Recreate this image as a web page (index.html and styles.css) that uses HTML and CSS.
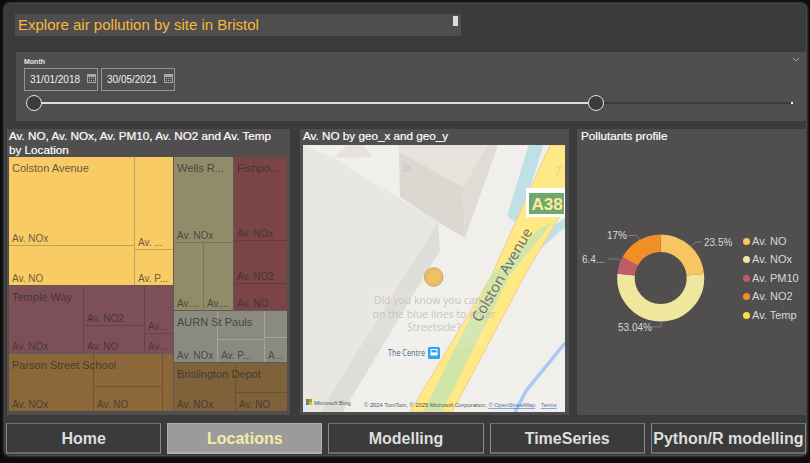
FILE: index.html
```html
<!DOCTYPE html>
<html>
  <head>
    <title>Explore air pollution by site in Bristol</title>
    <link rel="stylesheet" href="styles.css">
  </head>
  <body>
    <div class="frame">
      <!-- Title -->
      <div class="title-bar">
        <span>Explore air pollution by site in Bristol</span>
        <i class="title-handle"></i>
      </div>

      <!-- Month slicer -->
      <div class="slicer">
        <svg class="chevron" width="8" height="5" viewBox="0 0 8 5"><path d="M1 1l3 3 3-3" fill="none" stroke="#a8a8a8" stroke-width="1"/></svg>
        <div class="slicer-label">Month</div>
        <div class="dates">
          <div class="date-box">31/01/2018
            <svg class="cal" width="9" height="9" viewBox="0 0 9 9"><path d="M0 0h9v9H0z" fill="#a9a9a9"/><path d="M1 3h7v5H1z" fill="#504e4f"/><path d="M2 4h1v1H2zM4 4h1v1H4zM6 4h1v1H6zM2 6h1v1H2zM4 6h1v1H4zM6 6h1v1H6z" fill="#a9a9a9"/></svg>
          </div>
          <div class="date-box">30/05/2021
            <svg class="cal" width="9" height="9" viewBox="0 0 9 9"><path d="M0 0h9v9H0z" fill="#a9a9a9"/><path d="M1 3h7v5H1z" fill="#504e4f"/><path d="M2 4h1v1H2zM4 4h1v1H4zM6 4h1v1H6zM2 6h1v1H2zM4 6h1v1H4zM6 6h1v1H6z" fill="#a9a9a9"/></svg>
          </div>
        </div>
        <div class="slider">
          <i class="thumb"></i>
          <i class="track-on"></i>
          <i class="thumb"></i>
          <i class="track-off"></i>
          <i class="track-end"></i>
        </div>
      </div>

      <div class="panels">
        <!-- Treemap -->
        <div class="panel panel-tree">
          <h2>Av. NO, Av. NOx, Av. PM10, Av. NO2 and Av. Temp by Location</h2>
          <div class="tree row">
            <div class="col" style="flex: 164">
              <div class="group row yellow" style="flex: 128">
                <span class="name">Colston Avenue</span>
                <div class="col" style="flex: 125">
                  <div class="cell" style="flex: 88">Av. NOx</div>
                  <div class="cell" style="flex: 39">Av. NO</div>
                </div>
                <div class="col" style="flex: 38">
                  <div class="cell" style="flex: 92">Av. ...</div>
                  <div class="cell" style="flex: 35">Av. P...</div>
                </div>
              </div>
              <div class="group row plum" style="flex: 67">
                <span class="name">Temple Way</span>
                <div class="cell" style="flex: 74">Av. NOx</div>
                <div class="col" style="flex: 60">
                  <div class="cell" style="flex: 39">Av. NO2</div>
                  <div class="cell" style="flex: 27">Av. NO</div>
                </div>
                <div class="col" style="flex: 28">
                  <div class="cell" style="flex: 47">Av...</div>
                  <div class="cell" style="flex: 19">Av...</div>
                </div>
              </div>
              <div class="group row brown" style="flex: 57">
                <span class="name">Parson Street School</span>
                <div class="cell" style="flex: 84">Av. NOx</div>
                <div class="col" style="flex: 68">
                  <div class="cell" style="flex: 32"></div>
                  <div class="cell" style="flex: 24">Av. NO</div>
                </div>
                <div class="cell" style="flex: 10"></div>
              </div>
            </div>
            <div class="col" style="flex: 113">
              <div class="row" style="flex: 153">
                <div class="group col olive" style="flex: 59">
                  <span class="name">Wells R...</span>
                  <div class="cell" style="flex: 85">Av. NOx</div>
                  <div class="row" style="flex: 67">
                    <div class="cell" style="flex: 29">Av....</div>
                    <div class="cell" style="flex: 29">Av....</div>
                  </div>
                </div>
                <div class="group col wine" style="flex: 53">
                  <span class="name">Fishpo...</span>
                  <div class="cell" style="flex: 83">Av. NOx</div>
                  <div class="cell" style="flex: 42">Av. NO2</div>
                  <div class="cell" style="flex: 26">Av. NO</div>
                </div>
              </div>
              <div class="group row grey" style="flex: 51">
                <span class="name">AURN St Pauls</span>
                <div class="cell" style="flex: 43">Av. NOx</div>
                <div class="col" style="flex: 46">
                  <div class="cell" style="flex: 28"></div>
                  <div class="cell" style="flex: 22">Av. P...</div>
                </div>
                <div class="col" style="flex: 22">
                  <div class="cell" style="flex: 26"></div>
                  <div class="cell" style="flex: 24">A...</div>
                </div>
              </div>
              <div class="group row tan" style="flex: 48">
                <span class="name">Brislington Depot</span>
                <div class="cell" style="flex: 61">Av. NOx</div>
                <div class="col" style="flex: 51">
                  <div class="cell" style="flex: 29"></div>
                  <div class="cell" style="flex: 18">Av. NO</div>
                </div>
              </div>
            </div>
          </div>
        </div>

        <!-- Map -->
        <div class="panel panel-map">
          <h2>Av. NO by geo_x and geo_y</h2>
          <svg class="map" width="262" height="267" viewBox="303 145 262 267">
            <rect x="303" y="145" width="262" height="267" fill="#f0efeb"/>
            <path d="M347 145L333 158 373 157 363 145z" fill="#e6e3dd"/>
            <path d="M303 145L333 158 438 222 405 275 320 412H303z" fill="#e9e7e1"/>
            <path d="M438 222L440 251 425 275 343 412H320L405 275z" fill="#dfddd7"/>
            <path d="M398 145H488L463 187 399 152z" fill="#e6e3dd"/>
            <path d="M399 152L463 187 465 238 438 222 400 197z" fill="#dbd8d2"/>
            <path d="M463 187L488 145H498L465 238z" fill="#dfdcd6"/>
            <path d="M536 145L515 214" stroke="#bfe0e4" stroke-width="14" stroke-linecap="round" fill="none"/>
            <path d="M565 218V227L537 252 550 228z" fill="#bfe0e4"/>
            <path d="M550 145L492 275 410 412H452L525 275 575 190 590 145z" fill="#ffe985" stroke="#f6c98a" stroke-width="1"/>
            <path d="M553 222L510 275 442 412H423L492 275 538 230z" fill="#d2e5a8"/>
            <path d="M565 343L526 391 515 412" stroke="#a9c8f5" stroke-width="3.5" fill="none"/>
            <path d="M557 176L560 167M556 168L561 166 563 170" stroke="#f2cf82" stroke-width="1" fill="none"/>
            <text class="map-num" x="402" y="171">35</text>
            <circle cx="433.7" cy="277" r="9.2" fill="#efc268" stroke="#c9a35a" stroke-width="1"/>
            <circle cx="433.7" cy="277" r="7" fill="none" stroke="#d8ac5a" stroke-width=".6"/>
            <rect x="370" y="290" width="115" height="56" fill="#fff" opacity=".08"/>
            <text class="map-tip" x="434" y="304">Did you know you can cli</text>
            <text class="map-tip" x="434" y="318">on the blue lines to enter</text>
            <text class="map-tip" x="434" y="331">Streetside?</text>
            <text class="map-road" transform="translate(480 323) rotate(-60)">Colston Avenue</text>
            <text class="map-place" x="388" y="356" textLength="37" lengthAdjust="spacingAndGlyphs">The Centre</text>
            <rect x="428" y="347" width="12" height="12" rx="1.5" fill="#2ea3ee"/>
            <path d="M430.5 349h7v6.5h-7z" fill="#fff"/>
            <path d="M431.5 350h5v2.500h-5zM431 356h1.500v1.500H431zM435.500 356H437v1.500h-1.500z" fill="#2ea3ee"/>
            <path d="M306 399h3v3h-3z" fill="#f25022"/>
            <path d="M309 399h3v3h-3z" fill="#7fba00"/>
            <path d="M306 402h3v3h-3z" fill="#00a4ef"/>
            <path d="M309 402h3v3h-3z" fill="#ffb900"/>
            <text class="map-small" x="314" y="405">Microsoft Bing</text>
            <text class="map-small" x="364" y="407">© 2024 TomTom, © 2025 Microsoft Corporation, <tspan class="map-link">© OpenStreetMap</tspan>  <tspan class="map-link" dx="4">Terms</tspan></text>
            <rect x="526" y="188" width="39" height="29" fill="#fff"/>
            <rect x="529" y="193" width="35" height="21" fill="#6fa96f"/>
            <text class="map-shield" x="547" y="209.500">A38</text>
          </svg>
        </div>

        <!-- Donut -->
        <div class="panel panel-donut">
          <h2>Pollutants profile</h2>
          <div class="donut-wrap">
            <svg class="donut" width="160" height="120" viewBox="581 218 160 120">
              <g fill="none" stroke-width="17.5">
                <path d="M660.7 243.25A34.75 34.75 0 0 1 695.3 274.73" stroke="#f7c661"/>
                <path d="M695.3 274.73A34.75 34.75 0 1 1 626.11 274.65" stroke="#efe79d"/>
                <path d="M626.11 274.65A34.75 34.75 0 0 1 630.25 261.26" stroke="#c05c6a"/>
                <path d="M630.25 261.26A34.75 34.75 0 0 1 660.7 243.25" stroke="#f28e26"/>
              </g>
              <g fill="none" stroke="#7c7c7c" stroke-width="1">
                <path d="M691 246L696 242H702"/>
                <path d="M628 235.500H637L640 240"/>
                <path d="M608 259H619L621 262"/>
                <path d="M652 327H661V322"/>
              </g>
              <text class="donut-label" x="704" y="246">23.5%</text>
              <text class="donut-label" x="607" y="239">17%</text>
              <text class="donut-label" x="582" y="263">6.4...</text>
              <text class="donut-label" x="618" y="331">53.04%</text>
            </svg>
            <ul class="legend">
              <li><i class="dot dot-no"></i>Av. NO</li>
              <li><i class="dot dot-nox"></i>Av. NOx</li>
              <li><i class="dot dot-pm"></i>Av. PM10</li>
              <li><i class="dot dot-no2"></i>Av. NO2</li>
              <li><i class="dot dot-temp"></i>Av. Temp</li>
            </ul>
          </div>
        </div>
      </div>

      <!-- Page navigation -->
      <nav class="nav">
        <a>Home</a>
        <a class="active">Locations</a>
        <a>Modelling</a>
        <a>TimeSeries</a>
        <a>Python/R modelling</a>
      </nav>
    </div>
  </body>
</html>
```

FILE: styles.css
```css
* {
  box-sizing: border-box;
}

html,
body {
  margin: 0;
  height: 463px;
  overflow: hidden;
}

body {
  background: #0c0c0c;
  font-family: "Liberation Sans", Arial, sans-serif;
  color: #fff;
}

.frame {
  width: 801px;
  height: 451px;
  margin: 4px 0 0 5px;
  padding: 10px 0 0 0;
  background: #3b3b3b;
  border-radius: 5px;
  box-shadow: 0 0 3px 1px #6a6a6a;
  display: flex;
  flex-direction: column;
}

.title-bar {
  position: relative;
  width: 446px;
  height: 22px;
  margin-left: 10px;
  padding-left: 3px;
  background: #4f4d4e;
  color: #f8b93c;
  font-size: 15px;
  line-height: 22px;
}

.title-handle {
  position: absolute;
  left: 438px;
  top: 2px;
  width: 5px;
  height: 10px;
  background: #dcdcdc;
}

.slicer {
  position: relative;
  height: 69px;
  margin: 16px 0 0 11px;
  padding: 5px 8px 0;
  background: #504e4f;
}

.chevron {
  position: absolute;
  right: 6px;
  top: 5px;
}

.slicer-label {
  font-size: 7px;
  font-weight: bold;
  line-height: 9px;
  color: #e6e6e6;
}

.dates {
  display: flex;
  gap: 3px;
  margin-top: 2px;
}

.date-box {
  width: 74px;
  height: 23px;
  padding: 0 1px 0 5px;
  border: 1px solid #959595;
  font-size: 10px;
  line-height: 21px;
  color: #f0f0f0;
  display: flex;
  justify-content: space-between;
  align-items: center;
}

.cal {
  margin-bottom: 2px;
}

.slider {
  display: flex;
  align-items: center;
  height: 16px;
  margin: 4px 0 0 2px;
}

.thumb {
  flex: none;
  width: 16px;
  height: 16px;
  border: 1px solid #e4e4e4;
  border-radius: 50%;
  background: #3b3b3b;
}

.track-on {
  flex: none;
  width: 546px;
  height: 2px;
  background: #dedede;
}

.track-off {
  flex: none;
  width: 187px;
  height: 2px;
  background: #3b3b3b;
}

.track-end {
  flex: none;
  width: 2px;
  height: 2px;
  background: #fff;
}

.panels {
  display: flex;
  height: 286px;
  margin-top: 8px;
  margin-left: 2px;
}

.panel {
  background: #504e4f;
  flex: none;
}

.panel h2 {
  margin: 0;
  font-size: 11.7px;
  font-weight: normal;
  line-height: 14px;
  color: #fff;
  -webkit-text-stroke: 0.2px #fff;
}

.panel-tree {
  width: 283px;
  padding: 0 3px 0 2px;
}

.panel-tree h2 {
  padding-right: 10px;
}

.panel-map {
  width: 269px;
  margin-left: 10px;
  padding: 0 4px 0 3px;
}

.panel-donut {
  width: 229px;
  margin-left: 8px;
  padding-left: 4px;
}

.tree {
  width: 278px;
  height: 254px;
  background: #5c5a5a;
}

.row {
  display: flex;
  gap: 1px;
  min-width: 0;
  min-height: 0;
}

.col {
  display: flex;
  flex-direction: column;
  gap: 1px;
  min-width: 0;
  min-height: 0;
}

.row > *,
.col > * {
  flex-basis: 0;
  min-width: 0;
  min-height: 0;
}

.group {
  position: relative;
}

.name {
  position: absolute;
  left: 3px;
  top: 5px;
  font-size: 11px;
  line-height: 13px;
  white-space: nowrap;
  color: rgba(45, 45, 45, 0.75);
}

.cell {
  display: flex;
  align-items: flex-end;
  text-indent: 3px;
  overflow: hidden;
  white-space: nowrap;
  font-size: 10px;
  line-height: 12px;
  color: rgba(45, 45, 45, 0.72);
}

.yellow {
  background: #b9a264;
}

.yellow .cell {
  background: #f8cb63;
}

.plum {
  background: #66434a;
}

.plum .cell {
  background: #7d4f58;
}

.brown {
  background: #6f5334;
}

.brown .cell {
  background: #8c673a;
}

.olive {
  background: #77745a;
}

.olive .cell {
  background: #908b68;
}

.wine {
  background: #653b3c;
}

.wine .cell {
  background: #7b4546;
}

.grey {
  background: #a5a499;
}

.grey .cell {
  background: #8b8a7f;
}

.tan {
  background: #685033;
}

.tan .cell {
  background: #7f623a;
}

.map {
  display: block;
  margin-top: 2px;
  overflow: hidden;
  font-family: "Open Sans", sans-serif;
}

.map-num {
  font-size: 8px;
  font-weight: bold;
  fill: #cbc8c2;
}

.map-road {
  font-size: 14.5px;
  fill: #6e6c68;
}

.map-tip {
  font-size: 10.5px;
  text-anchor: middle;
  fill: #c8c5c0;
}

.map-place {
  font-size: 9px;
  fill: #3f6d8c;
}

.map-small {
  font-family: "Liberation Sans", sans-serif;
  font-size: 5.8px;
  fill: #555;
}

.map-link {
  fill: #4a6fb5;
  text-decoration: underline;
}

.map-shield {
  font-family: "Liberation Sans", sans-serif;
  font-size: 17px;
  font-weight: bold;
  text-anchor: middle;
  fill: #ffec9e;
}

.donut-wrap {
  display: flex;
  align-items: center;
  height: 120px;
  margin-top: 75px;
}

.donut {
  display: block;
  flex: none;
}

.donut-label {
  font-family: "Liberation Sans", sans-serif;
  font-size: 10px;
  fill: #d8d8d8;
}

.legend {
  list-style: none;
  margin: 0;
  padding: 0 0 0 2px;
  font-size: 11px;
  line-height: 18.500px;
  color: #d8d8d8;
}

.legend li {
  display: flex;
  align-items: center;
  gap: 2px;
  white-space: nowrap;
}

.dot {
  width: 7px;
  height: 7px;
  border-radius: 50%;
}

.dot-no {
  background: #f7c661;
}

.dot-nox {
  background: #efe79d;
}

.dot-pm {
  background: #c05c6a;
}

.dot-no2 {
  background: #f28e26;
}

.dot-temp {
  background: #f8e13c;
}

.nav {
  display: flex;
  gap: 6px;
  margin: 8px 0 0 1px;
}

.nav a {
  flex: 1;
  height: 31px;
  border: 1px solid #8a8a8a;
  border-top-color: #6f6f6f;
  border-bottom: 2px solid #6a6a6a;
  text-align: center;
  font-size: 16px;
  font-weight: bold;
  line-height: 30px;
  color: #dedede;
  white-space: nowrap;
}

.nav a.active {
  background: #9b9b9b;
  border-color: #b0b0b0;
  color: #f4eca5;
}
```
